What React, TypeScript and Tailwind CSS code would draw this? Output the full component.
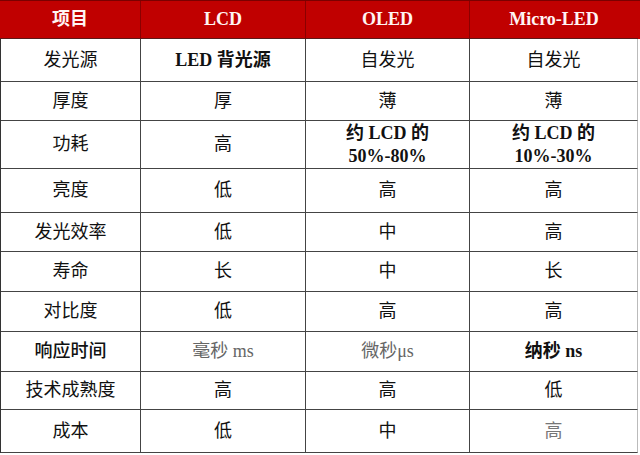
const head = ['项目', 'LCD', 'OLED', 'Micro-LED'];

type Cell = { text: React.ReactNode; cls?: string };

const rows: { h: string; cells: Cell[] }[] = [
  {
    h: 'h-[43px]',
    cells: [
      { text: '发光源' },
      { text: 'LED 背光源', cls: 'font-bold' },
      { text: '自发光' },
      { text: '自发光' },
    ],
  },
  { h: 'h-[39px]', cells: [{ text: '厚度' }, { text: '厚' }, { text: '薄' }, { text: '薄' }] },
  {
    h: 'h-[48px]',
    cells: [
      { text: '功耗' },
      { text: '高' },
      {
        text: (
          <>
            约 LCD 的<br />
            50%-80%
          </>
        ),
        cls: 'font-bold leading-[23px]',
      },
      {
        text: (
          <>
            约 LCD 的<br />
            10%-30%
          </>
        ),
        cls: 'font-bold leading-[23px]',
      },
    ],
  },
  { h: 'h-[44px]', cells: [{ text: '亮度' }, { text: '低' }, { text: '高' }, { text: '高' }] },
  { h: 'h-[39px]', cells: [{ text: '发光效率' }, { text: '低' }, { text: '中' }, { text: '高' }] },
  { h: 'h-[40px]', cells: [{ text: '寿命' }, { text: '长' }, { text: '中' }, { text: '长' }] },
  { h: 'h-[40px]', cells: [{ text: '对比度' }, { text: '低' }, { text: '高' }, { text: '高' }] },
  {
    h: 'h-[40px]',
    cells: [
      { text: '响应时间', cls: 'font-medium' },
      { text: '毫秒 ms', cls: 'text-[#666]' },
      { text: '微秒μs', cls: 'text-[#666]' },
      { text: '纳秒 ns', cls: 'font-bold' },
    ],
  },
  { h: 'h-[38px]', cells: [{ text: '技术成熟度' }, { text: '高' }, { text: '高' }, { text: '低' }] },
  {
    h: 'h-[43px]',
    cells: [{ text: '成本' }, { text: '低' }, { text: '中' }, { text: '高', cls: 'text-[#777]' }],
  },
];

const widths = ['w-[141px]', 'w-[165px]', 'w-[164px]', 'w-[168px]'];

export default function App() {
  return (
    <div className="w-[640px] h-[455px] bg-white font-['Liberation_Serif','Noto_Sans_CJK_SC',serif] text-[18px] text-[#111]">
      <div className="flex h-[39px] bg-[#c00000] border-t border-[#7a0000]">
        {head.map((t, i) => (
          <div
            key={t}
            className={`${widths[i]} flex items-center justify-center font-bold text-[18px] text-[#fff4f4] border-b border-[#5a1a1a] ${
              i < 3 ? 'border-r border-r-[#8a0000]' : ''
            }`}
          >
            {t}
          </div>
        ))}
      </div>
      <div className="border-l border-[#333] w-[639px]">
        {rows.map((r, ri) => (
          <div key={ri} className={`flex ${r.h}`}>
            {r.cells.map((c, ci) => (
              <div
                key={ci}
                className={`${ci === 0 ? 'w-[140px]' : widths[ci]} flex items-center justify-center text-center border-b border-r border-[#444] ${
                  ci === 3 ? 'border-r-[#bbb]' : ''
                } ${c.cls ?? ''}`}
              >
                <span>{c.text}</span>
              </div>
            ))}
          </div>
        ))}
      </div>
    </div>
  );
}
